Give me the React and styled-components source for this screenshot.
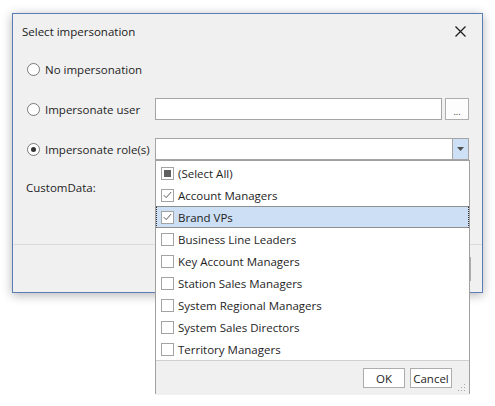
import styled, { createGlobalStyle } from "styled-components";

const GlobalStyle = createGlobalStyle`
  html, body {
    min-height: 100vh;
  }
  body {
    margin: 0;
    background: #ffffff;
    font-family: "Open Sans", "Noto Sans", sans-serif;
    font-size: 11.5px;
    color: #1e1e1e;
  }
  #root {
    min-height: 406px;
  }
`;

const roles = [
  { label: "(Select All)", state: "partial" },
  { label: "Account Managers", state: "checked" },
  { label: "Brand VPs", state: "checked", focused: true },
  { label: "Business Line Leaders" },
  { label: "Key Account Managers" },
  { label: "Station Sales Managers" },
  { label: "System Regional Managers" },
  { label: "System Sales Directors" },
  { label: "Territory Managers" },
];

export default function App() {
  return (
    <>
      <GlobalStyle />
      <Window>
        <TitleBar>
          <Title>Select impersonation</Title>
          <CloseButton>
            <svg width="11" height="11" viewBox="0 0 11 11">
              <path d="M0.5 0.5 L10.5 10.5 M10.5 0.5 L0.5 10.5" stroke="#1a1a1a" strokeWidth="1.2" />
            </svg>
          </CloseButton>
        </TitleBar>

        <Body>
          <Row>
            <RadioLabel>
              <Radio />
              No impersonation
            </RadioLabel>
          </Row>
          <Row>
            <RadioLabel>
              <Radio />
              Impersonate user
            </RadioLabel>
            <TextBox />
            <DotsButton>...</DotsButton>
          </Row>
          <Row>
            <RadioLabel>
              <Radio selected />
              Impersonate role(s)
            </RadioLabel>
            <Combo>
              <ComboText />
              <ComboArrow>
                <svg width="7" height="4" viewBox="0 0 7 4">
                  <path d="M0 0 H7 L3.5 4 Z" fill="#505050" />
                </svg>
              </ComboArrow>
              <Popup>
                <List>
                  {roles.map((r) => (
                    <Item key={r.label} focused={r.focused}>
                      <Check>
                        {r.state === "checked" && (
                          <svg width="9" height="8" viewBox="0 0 9 8">
                            <path d="M0.8 4.2 L3.2 6.6 L8.2 1" stroke="#5a5a5a" strokeWidth="1" fill="none" />
                          </svg>
                        )}
                        {r.state === "partial" && <Partial />}
                      </Check>
                      {r.label}
                    </Item>
                  ))}
                </List>
                <PopupFooter>
                  <SmallButton>OK</SmallButton>
                  <SmallButton>Cancel</SmallButton>
                  <Grip>
                    <svg width="8" height="8" viewBox="0 0 8 8" fill="#a8a8a8">
                      <rect x="6" y="0" width="1" height="1" />
                      <rect x="3" y="3" width="1" height="1" />
                      <rect x="6" y="3" width="1" height="1" />
                      <rect x="0" y="6" width="1" height="1" />
                      <rect x="3" y="6" width="1" height="1" />
                      <rect x="6" y="6" width="1" height="1" />
                    </svg>
                  </Grip>
                </PopupFooter>
              </Popup>
            </Combo>
          </Row>
          <DataRow>
            <FieldLabel>CustomData:</FieldLabel>
            <TextBox />
          </DataRow>
        </Body>

        <Footer>
          <DialogButton>OK</DialogButton>
          <DialogButton>Cancel</DialogButton>
        </Footer>
      </Window>
    </>
  );
}

const Window = styled.div`
  position: relative;
  margin: 13px 0 0 12px;
  width: 471px;
  height: 280px;
  box-sizing: border-box;
  background: #f0f0f0;
  border: 1px solid #5a7db6;
  box-shadow: 0 2px 10px rgba(0, 0, 0, 0.3);
  display: flex;
  flex-direction: column;
`;

const TitleBar = styled.div`
  height: 34px;
  display: flex;
  align-items: center;
  justify-content: space-between;
  padding: 0 16px 0 9px;
`;

const Title = styled.span`
  font-size: 11.5px;
  color: #1a1a1a;
`;

const CloseButton = styled.div`
  display: flex;
  align-items: center;
`;

const Body = styled.div`
  flex: 1;
  padding: 10px 13px 0 14px;
  display: flex;
  flex-direction: column;
  gap: 18px;
`;

const Row = styled.div`
  height: 22px;
  display: flex;
  align-items: center;
`;

const DataRow = styled(Row)`
  margin-top: -2px;
`;

const RadioLabel = styled.label`
  width: 128px;
  flex: none;
  display: flex;
  align-items: center;
  gap: 5px;
  white-space: nowrap;
`;

const Radio = styled.span`
  width: 13px;
  height: 13px;
  box-sizing: border-box;
  border-radius: 50%;
  border: 1px solid #7a7a7a;
  background: #ffffff;
  display: flex;
  align-items: center;
  justify-content: center;
  &::after {
    content: "";
    width: 5px;
    height: 5px;
    border-radius: 50%;
    background: ${({ selected }) => (selected ? "#333333" : "transparent")};
  }
`;

const FieldLabel = styled.span`
  width: 130px;
  flex: none;
  margin-left: -1px;
`;

const TextBox = styled.div`
  flex: 1;
  height: 22px;
  box-sizing: border-box;
  background: #ffffff;
  border: 1px solid #a5a5a5;
`;

const DotsButton = styled.div`
  width: 24px;
  height: 22px;
  margin-left: 3px;
  box-sizing: border-box;
  background: #fdfdfd;
  border: 1px solid #adadad;
  display: flex;
  align-items: flex-end;
  justify-content: center;
  font-size: 9px;
  line-height: 14px;
  color: #333333;
`;

const Combo = styled.div`
  position: relative;
  flex: 1;
  height: 22px;
  box-sizing: border-box;
  background: #ffffff;
  border: 1px solid #a5a5a5;
  display: flex;
`;

const ComboText = styled.div`
  flex: 1;
`;

const ComboArrow = styled.div`
  width: 15px;
  background: #cde0f6;
  border-left: 1px solid #a5a5a5;
  display: flex;
  align-items: center;
  justify-content: center;
`;

const Popup = styled.div`
  position: absolute;
  top: 21px;
  left: -1px;
  right: -2px;
  height: 234px;
  box-sizing: border-box;
  background: #ffffff;
  border: 1px solid #a0a0a0;
  display: flex;
  flex-direction: column;
  z-index: 10;
`;

const List = styled.div`
  flex: 1;
  padding-top: 1px;
  display: flex;
  flex-direction: column;
`;

const Item = styled.div`
  height: 22px;
  box-sizing: border-box;
  display: flex;
  align-items: center;
  gap: 4px;
  padding-left: 4px;
  white-space: nowrap;
  background: ${({ focused }) => (focused ? "#cddff4" : "transparent")};
  border-top: 1px solid ${({ focused }) => (focused ? "#8e8e8e" : "transparent")};
  border-bottom: 1px solid ${({ focused }) => (focused ? "#8e8e8e" : "transparent")};
  border-left: 1px dotted ${({ focused }) => (focused ? "#333333" : "transparent")};
  border-right: 1px dotted ${({ focused }) => (focused ? "#333333" : "transparent")};
`;

const Check = styled.span`
  width: 13px;
  height: 13px;
  flex: none;
  box-sizing: border-box;
  border: 1px solid #a3a3a3;
  background: #ffffff;
  display: flex;
  align-items: center;
  justify-content: center;
`;

const Partial = styled.span`
  width: 7px;
  height: 7px;
  background: #5f5f5f;
`;

const PopupFooter = styled.div`
  height: 34px;
  flex: none;
  background: #f0f0f0;
  border-top: 1px solid #d0d0d0;
  display: flex;
  align-items: center;
  justify-content: flex-end;
  gap: 5px;
  padding-right: 17px;
  position: relative;
`;

const SmallButton = styled.div`
  height: 20px;
  min-width: 42px;
  padding: 0 2px;
  box-sizing: border-box;
  background: #ffffff;
  border: 1px solid #adadad;
  display: flex;
  align-items: center;
  justify-content: center;
`;

const Grip = styled.div`
  position: absolute;
  right: 3px;
  bottom: 3px;
  display: flex;
`;

const Footer = styled.div`
  height: 47px;
  border-top: 1px solid #dadada;
  display: flex;
  align-items: center;
  justify-content: flex-end;
  gap: 6px;
  padding-right: 11px;
`;

const DialogButton = styled.div`
  width: 75px;
  height: 24px;
  box-sizing: border-box;
  background: #e1e1e1;
  border: 1px solid #adadad;
  display: flex;
  align-items: center;
  justify-content: center;
`;
